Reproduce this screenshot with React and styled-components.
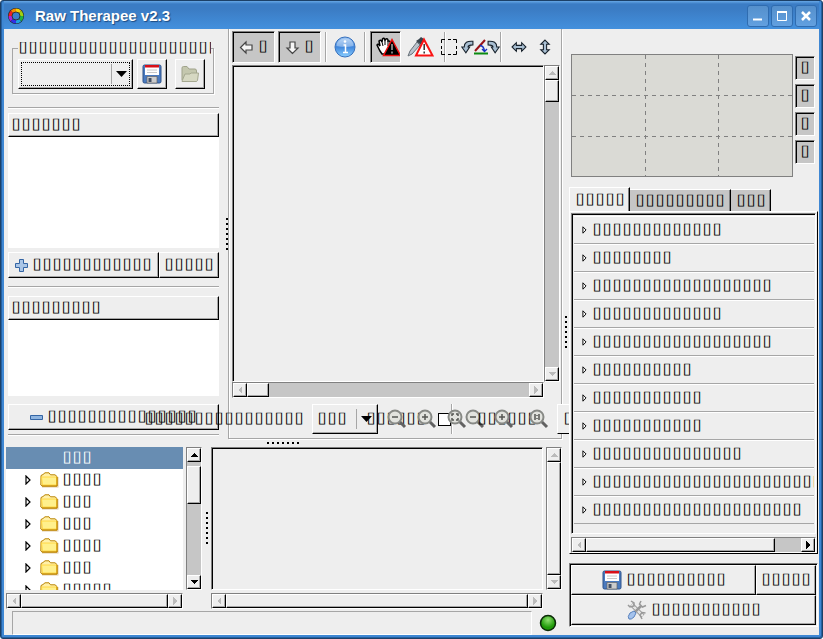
import React, { useState } from "react";
import styled, { createGlobalStyle, css } from "styled-components";

const GlobalStyle = createGlobalStyle`
  * {
    box-sizing: border-box;
  }
  body {
    margin: 0;
    background: #fff;
  }
  body, button, select, input {
    font-family: "Liberation Sans", Arial, sans-serif;
    font-size: 17px;
    line-height: 20px;
    color: #000;
  }
  button {
    cursor: pointer;
  }
`;

/* the interface font has no glyphs for the labels, every letter is a box */
const box = (n) => "\u2337".repeat(n);

const raised = css`
  border: 1px solid;
  border-color: #fff #000 #000 #fff;
  box-shadow: inset -1px -1px #a6a6a6;
  background: #eee;
`;
const sunken = css`
  border: 1px solid;
  border-color: #808080 #fff #fff #808080;
  box-shadow: inset 1px 1px #000;
`;

const Window = styled.div`
  display: flex;
  flex-direction: column;
  min-height: 100vh;
  border: 1px solid #1c4067;
  border-radius: 3px;
  background: #3e87d3;
  padding: 0 3px 3px;
  box-shadow: inset -1px -1px #2560a0, inset 1px 0 #2560a0;
`;
const TitleBar = styled.header`
  display: flex;
  align-items: center;
  gap: 2px;
  height: 28px;
  padding: 2px 2px 0 3px;
  background: linear-gradient(#66a7e6 0, #3b7cc4 3px, #3b7cc4 8px, #4390dd 28px);
`;
const Title = styled.h1`
  flex: 1;
  margin: 0 0 0 8px;
  font-size: 15px;
  font-weight: bold;
  color: #fff;
  text-shadow: 1px 1px 1px #1c4a80;
`;
const TitleButton = styled.button`
  display: flex;
  align-items: center;
  justify-content: center;
  width: 22px;
  height: 22px;
  padding: 0;
  border: 1px solid #2f6cb0;
  border-radius: 3px;
  background: linear-gradient(#5590cc, #62a0e0);
`;
const Body = styled.main`
  flex: 1;
  display: grid;
  grid-template-columns: minmax(0, 1fr) 7px 250px;
  background: #eee;
`;
const Work = styled.div`
  display: flex;
  flex-direction: column;
  min-width: 0;
`;
const Upper = styled.div`
  flex: 1;
  display: grid;
  grid-template-columns: 211px 9px minmax(0, 1fr);
  padding-left: 4px;
`;
const Side = styled.aside`
  display: flex;
  flex-direction: column;
  padding-top: 13px;
`;
const Profile = styled.fieldset`
  display: flex;
  align-items: flex-start;
  min-width: 0;
  height: 52px;
  margin: 0 5px 13px 4px;
  padding: 5px 4px 0 5px;
  border: 1px solid #a6a6a6;
  box-shadow: 1px 1px #fff;
`;
const Legend = styled.legend`
  width: 193px;
  height: 12px;
  padding: 0;
  line-height: 12px;
  overflow: hidden;
  white-space: nowrap;
`;
const SelectWrap = styled.div`
  ${raised}
  display: grid;
  grid-template-columns: minmax(0, 1fr) 22px;
  align-items: center;
  flex: none;
  width: ${(p) => p.$width}px;
  height: 30px;
  margin-right: ${(p) => p.$after || 0}px;
  margin-left: ${(p) => p.$before || 0}px;
  ${(p) => p.$focus && "outline: 1px dotted #000; outline-offset: -4px;"}
  svg {
    grid-area: 1 / 2;
    justify-self: center;
    pointer-events: none;
  }
`;
const Select = styled.select`
  grid-area: 1 / 1 / 2 / 3;
  appearance: none;
  width: 100%;
  height: 26px;
  padding: 0 4px;
  border: 0;
  outline: 0;
  background: linear-gradient(#a6a6a6, #a6a6a6) right 20px center / 1px 20px no-repeat;
`;
const Button = styled.button`
  ${raised}
  display: flex;
  align-items: center;
  justify-content: center;
  gap: 4px;
  flex: ${(p) => (p.$grow ? 1 : "none")};
  width: ${(p) => (p.$width ? `${p.$width}px` : "auto")};
  height: ${(p) => p.$height || 26}px;
  margin-right: ${(p) => p.$after || 0}px;
  padding: 0;
  white-space: nowrap;
`;
const Rule = styled.hr`
  width: 100%;
  height: 2px;
  margin: ${(p) => p.$before || 0}px 0 ${(p) => p.$after}px;
  border: 0;
  background: #a6a6a6;
  border-bottom: 1px solid #fff;
`;
const Header = styled.button`
  ${raised}
  height: 24px;
  padding: 0 2px;
  text-align: left;
`;
const Blank = styled.div`
  flex: ${(p) => p.$share} 0 0;
  background: #fff;
  margin-bottom: ${(p) => p.$after}px;
`;
const Row = styled.div`
  display: flex;
`;
const Grip = styled.div`
  align-self: center;
  justify-self: ${(p) => (p.$end ? "end" : "center")};
  width: ${(p) => (p.$flat ? 32 : 2)}px;
  height: ${(p) => (p.$flat ? 2 : 32)}px;
  margin: ${(p) => (p.$flat ? "3px 0" : 0)};
  background: ${(p) =>
    p.$flat
      ? "repeating-linear-gradient(90deg, #000 0 2px, transparent 2px 5px)"
      : "repeating-linear-gradient(#000 0 2px, transparent 2px 5px)"};
`;
const Editor = styled.section`
  display: flex;
  flex-direction: column;
  min-width: 0;
  border: 1px solid #a6a6a6;
  border-top: 0;
  box-shadow: inset 1px 0 #fff, 1px 1px #fff;
  padding: 2px 1px 4px 3px;
`;
const Toolbar = styled.div`
  display: flex;
  align-items: center;
  height: 32px;
  margin-bottom: 2px;
`;
const Toggle = styled.button`
  ${sunken}
  display: flex;
  align-items: center;
  justify-content: ${(p) => (p.$end ? "flex-end" : "center")};
  gap: 4px;
  flex: none;
  width: ${(p) => p.$width}px;
  height: ${(p) => p.$height || 32}px;
  margin-right: ${(p) => p.$after || 0}px;
  padding: 0;
  background: #c6c6c6;
`;
const Tool = styled.button`
  display: flex;
  align-items: center;
  justify-content: center;
  flex: none;
  width: ${(p) => p.$width}px;
  height: 30px;
  padding: 0;
  border: 0;
  background: none;
  svg {
    flex: none;
  }
`;
const Divider = styled.span`
  flex: none;
  width: 2px;
  height: 30px;
  margin-left: ${(p) => p.$before || 0}px;
  margin-right: ${(p) => p.$after || 0}px;
  background: #a6a6a6;
  border-right: 1px solid #fff;
`;
const Scrolled = styled.div`
  flex: ${(p) => (p.$fill ? 1 : "none")};
  display: grid;
  grid-template-columns: minmax(0, 1fr) 16px;
  grid-template-rows: minmax(0, 1fr) 16px;
  gap: ${(p) => p.$gap || 0}px;
  height: ${(p) => (p.$height ? `${p.$height}px` : "auto")};
`;
const Canvas = styled.div`
  ${sunken}
  background: #eee;
`;
const Bar = styled.div`
  display: flex;
  flex-direction: ${(p) => (p.$vertical ? "column" : "row")};
  border: 1px solid;
  border-color: #808080 #fff #fff #808080;
  background: #c6c6c6;
`;
const Arrow = styled.button`
  ${raised}
  display: flex;
  align-items: center;
  justify-content: center;
  flex: none;
  width: 14px;
  height: 14px;
  padding: 0;
  svg {
    transform: rotate(${(p) => p.$turn}deg);
  }
`;
const Thumb = styled.div`
  ${raised}
  flex: ${(p) => (p.$size ? `0 0 ${p.$size}px` : 1)};
  margin: ${(p) => (p.$offset ? `${p.$offset}px 0 0` : 0)};
`;
const Rest = styled.div`
  flex: 1;
`;
const ZoomBar = styled.div`
  display: flex;
  align-items: center;
  height: 30px;
  margin: 6px -9px 0 0;
  padding-left: 72px;
`;
/* takes no room of its own, the text runs out over the neighbours */
const Spill = styled.label`
  display: flex;
  flex: none;
  justify-content: ${(p) => (p.$left ? "flex-end" : "flex-start")};
  width: 0;
  margin-left: ${(p) => -p.$back || 0}px;
  margin-right: ${(p) => p.$after || 0}px;
  white-space: nowrap;
`;
const Check = styled.input`
  appearance: none;
  flex: none;
  width: 13px;
  height: 13px;
  margin: 0 0 0 -4px;
  border: 1px solid #000;
  background: #fff;
`;
const CutButton = styled.button`
  flex: none;
  width: 12px;
  height: 30px;
  margin-left: 2px;
  padding: 0 0 0 5px;
  overflow: hidden;
  text-align: left;
  border: 1px solid;
  border-color: #fff transparent #000 #fff;
  border-right: 0;
  background: #eee;
`;
const Lower = styled.div`
  display: grid;
  grid-template-columns: 196px 9px minmax(0, 1fr);
  padding-left: 2px;
`;
const Tree = styled.ul`
  margin: 0;
  padding: 0;
  overflow: hidden;
  list-style: none;
  background: #fff;
`;
const TreeItem = styled.li`
  display: grid;
  grid-template-columns: 34px 22px 1fr;
  align-items: center;
  height: 22px;
  white-space: nowrap;
  ${(p) => p.$selected && "background: #688db2; color: #fff;"}
  svg:first-child {
    margin-left: 19px;
  }
  span {
    grid-column: 3;
  }
`;
const Status = styled.footer`
  display: flex;
  align-items: center;
  gap: 7px;
  height: 26px;
  padding: 2px 5px 0 8px;
`;
const StatusText = styled.output`
  flex: 1;
  height: 24px;
  border: 1px solid;
  border-color: #a6a6a6 #fff #fff #a6a6a6;
`;
const Right = styled.aside`
  display: flex;
  flex-direction: column;
  min-width: 0;
  padding: 25px 1px 8px 0;
`;
const Scope = styled.div`
  display: flex;
  gap: 2px;
  margin: 0 3px 11px 2px;
`;
const Histogram = styled.svg`
  flex: 1;
  min-width: 0;
  height: 123px;
  border: 1px solid #808080;
  background: #dadad5;
`;
const Channels = styled.div`
  display: flex;
  flex-direction: column;
  gap: 4px;
  padding-top: 2px;
`;
const Tabs = styled.div`
  display: flex;
  align-items: flex-end;
  height: 23px;
`;
const Tab = styled.button`
  flex: none;
  width: ${(p) => p.$width}px;
  height: ${(p) => (p.$active ? 24 : 22)}px;
  padding: 0;
  border: 1px solid;
  border-color: #fff #000 transparent #fff;
  border-bottom: 0;
  border-left-width: ${(p) => (p.$active ? 1 : 0)}px;
  box-shadow: inset -1px 0 #808080;
  background: ${(p) => (p.$active ? "#eee" : "#c6c6c6")};
`;
const Notebook = styled.div`
  flex: 1;
  display: flex;
  flex-direction: column;
  gap: 3px;
  margin-bottom: 9px;
  padding: 1px 1px 0;
  border: 1px solid;
  border-color: #fff #000 #000 #fff;
`;
const ToolList = styled.ul`
  ${sunken}
  flex: 1;
  margin: 0;
  padding: 2px 1px 0 2px;
  overflow: hidden;
  list-style: none;
`;
const ToolHead = styled.button`
  display: flex;
  align-items: center;
  gap: 5px;
  width: 100%;
  height: 28px;
  padding: 0 0 0 8px;
  overflow: hidden;
  white-space: nowrap;
  border: 0;
  border-top: 1px solid #fff;
  border-bottom: 1px solid #a6a6a6;
  background: #eee;
  svg {
    flex: none;
  }
`;
const Actions = styled.div`
  ${sunken}
  padding: 1px;
`;

const Tri = ({ fill }) => (
  <svg width="8" height="8" viewBox="0 0 8 8" shapeRendering="crispEdges">
    <path d="M0 6H8L4 2Z" fill={fill} />
  </svg>
);
const DropArrow = () => (
  <svg width="11" height="6" viewBox="0 0 11 6">
    <path d="M0 0H11L5.500 6Z" />
  </svg>
);
const Expander = ({ big }) => (
  <svg width={big ? 6 : 5} height={big ? 10 : 8} viewBox="0 0 6 10">
    <path d="M1 1V9L5 5Z" fill="#fff" stroke="#000" strokeWidth="1.200" />
  </svg>
);
const Folder = () => (
  <svg width="19" height="16" viewBox="0 0 19 16">
    <path d="M3 5H18.500V15.500H2Z" fill="#e0c9a8" />
    <path d="M1 3.500L3 2.500L5 .800H9L10.500 2.800H15L17 4.500V14H2L.800 13Z" fill="#fff0a8" stroke="#b98300" />
    <path d="M1.500 5H16.500V13H2.500Z" fill="#fff08c" stroke="#ffd030" strokeWidth=".8" />
    <path d="M2 14H17V5" fill="none" stroke="#c48a00" />
  </svg>
);
const Floppy = () => (
  <svg width="20" height="20" viewBox="0 0 20 20">
    <rect x="1" y="1" width="18" height="18" rx="1.500" fill="#4a7abf" stroke="#2f5288" />
    <path d="M3 1H17V11H3Z" fill="#fff" />
    <path d="M3 1H17V3.500H3Z" fill="#d80f18" />
    <path d="M5 6H15M5 8.500H15" stroke="#c8c8c8" />
    <path d="M5 12.500H15V19H5Z" fill="#ccc" stroke="#666" strokeWidth=".7" />
    <path d="M6.500 14H9.500V18H6.500Z" fill="#445064" />
  </svg>
);
const OpenFolder = () => (
  <svg width="20" height="18" viewBox="0 0 20 18">
    <path d="M2 15V3Q2 1.500 3.500 1.500H7L9 4H15Q16.500 4 16.500 6V9" fill="#c4c7ae" stroke="#a0a38b" />
    <path d="M2 16L5 9H10L11 8H18.500L17.500 15.500Q17 16.500 16 16.500H2Z" fill="#d6d8c2" stroke="#a5a890" />
  </svg>
);
const Plus = () => (
  <svg width="13" height="13" viewBox="0 0 13 13">
    <path d="M4.500 .500H8.500V4.500H12.500V8.500H8.500V12.500H4.500V8.500H.500V4.500H4.500Z" fill="#a9c5e6" stroke="#3465a4" />
  </svg>
);
const Minus = () => (
  <svg width="13" height="5" viewBox="0 0 13 5">
    <path d="M.500 .500H12.500V4.500H.500Z" fill="#8fb5e0" stroke="#3465a4" />
  </svg>
);
const BlockArrow = ({ down }) => (
  <svg width="15" height="15" viewBox="0 0 15 15">
    <path
      d="M1.500 7.500L7 2V5H13V10H7V13Z"
      fill="#f6f6f6"
      stroke="#444"
      strokeWidth="1.200"
      transform={down ? "rotate(-90 7.500 7.500)" : undefined}
    />
  </svg>
);
const Info = () => (
  <svg width="22" height="22" viewBox="0 0 22 22">
    <defs>
      <linearGradient id="info" x2="0" y2="1">
        <stop stopColor="#9cc4f2" />
        <stop offset=".5" stopColor="#3f86dc" />
        <stop offset="1" stopColor="#8cd0ff" />
      </linearGradient>
    </defs>
    <circle cx="11" cy="11" r="10" fill="url(#info)" stroke="#3670bd" />
    <path d="M2.500 10Q3 3 11 2.500T19.500 10Q11 12 2.500 10Z" fill="#fff" opacity=".35" />
    <circle cx="11" cy="5.500" r="1.300" fill="#fff" />
    <path d="M9.500 9H11.500V16M9 16.500H14" fill="none" stroke="#fff" strokeWidth="1.500" />
  </svg>
);
const Hand = () => (
  <svg width="24" height="20" viewBox="0 0 24 20">
    <path
      d="M1 8Q2 6 4 9L3 4Q5 2 6 5L6.500 2Q8 0 9 3L10 2Q12 1 12 4L13 4Q15 4 14 8V13L12 17H6L4 14Z"
      fill="#fff"
      stroke="#000"
      strokeWidth="1.500"
    />
    <path d="M6 5L7 9M9 3V8M12 4V9" stroke="#000" />
    <path d="M16 2.500L24.500 18.500H7.500Z" stroke="#f01010" strokeWidth="1.500" />
    <path d="M16 7V13M16 14.500V16.500" stroke="#aaa" strokeWidth="1.500" />
  </svg>
);
const Picker = () => (
  <svg width="27" height="20" viewBox="0 0 27 20">
    <path d="M1 19L3 14L10 5L13 8L5 17Z" fill="#b9c3cc" stroke="#677078" />
    <path d="M9 4L12 2L14 0L17 2L14 8Z" fill="#39444d" />
    <path d="M17 2.500L25.500 18.500H9Z" fill="#fff" stroke="#fa1414" strokeWidth="2" />
    <path d="M17.200 7V13M17.200 14.500V16.500" stroke="#333" strokeWidth="1.500" />
  </svg>
);
const Crop = () => (
  <svg width="18" height="18" viewBox="0 0 18 18">
    <path d="M1.500 5V1.500H5M8 1.500H11M13 1.500H16.500V5M16.500 8V11M16.500 13V16.500H13M11 16.500H8M5 16.500H1.500V13M1.500 11V8" fill="none" stroke="#000" />
  </svg>
);
const Turn = ({ flip }) => (
  <svg width="13" height="14" viewBox="0 0 12 12">
    <path
      d="M11 .700Q3 0 3 6H.700L4.500 11.300L8 6H6.500Q6.500 4 11 4Z"
      fill="#a9bfd2"
      stroke="#17212b"
      transform={flip ? "matrix(-1 0 0 1 12 0)" : undefined}
    />
  </svg>
);
const Straighten = () => (
  <svg width="15" height="16" viewBox="0 0 15 16">
    <path d="M1 12L11 1" stroke="#981218" strokeWidth="2" />
    <path d="M0 14.500H14" stroke="#0b8a10" strokeWidth="2" />
    <path d="M6 6.500Q10 7 10.500 12M8 10L10.500 12.500L13 10" fill="none" stroke="#1530c0" strokeWidth="1.300" />
  </svg>
);
const Flip = ({ vertical }) => (
  <svg width="16" height="16" viewBox="0 0 15 15">
    <path
      d="M1 7.500L5 3.500V6H10V3.500L14 7.500L10 11.500V9H5V11.500Z"
      fill="#a9bfd2"
      stroke="#17212b"
      transform={vertical ? "rotate(90 7.500 7.500)" : undefined}
    />
  </svg>
);
const signs = {
  out: "M5 8H11",
  in: "M5 8H11M8 5V11",
  full: "M6 5V11M10 5V11M8 6V7M8 9V10",
  fit: "M5 7V5H7M9 5H11V7M11 9V11H9M7 11H5V9",
};
const Lens = ({ sign }) => (
  <svg width="20" height="20" viewBox="0 0 20 20">
    <path d="M12.500 12.500L18 18" stroke="#626262" strokeWidth="3" />
    <circle cx="8" cy="8" r="6.500" fill="#e2e3de" stroke="#878985" strokeWidth="2" />
    <path d={signs[sign]} fill="none" stroke="#555753" strokeWidth="1.500" />
  </svg>
);
const Tools = () => (
  <svg width="20" height="20" viewBox="0 0 20 20">
    <path d="M4.500 4.500L16 16" stroke="#888" strokeWidth="4" />
    <path d="M4.500 4.500L16 16" stroke="#e4e4e4" strokeWidth="2.500" />
    <path d="M1 5L3 7L7 6V3L4 1" fill="none" stroke="#999" strokeWidth="1.500" />
    <path d="M18.500 13L15 12.500L13 15L15 19" fill="none" stroke="#999" strokeWidth="1.500" />
    <path d="M8 12L14 6" stroke="#999" strokeWidth="2.500" />
    <path d="M14 1L12.500 4L15.500 7L19 5.500" fill="#eee" stroke="#999" strokeWidth="1.500" />
    <path d="M2 19Q0 17 3 13L7 11L9 13L7 17Q4 20 2 19Z" fill="#a4c2ec" stroke="#5a82bd" />
  </svg>
);
const Logo = () => (
  <svg width="18" height="18" viewBox="0 0 18 18">
    <circle cx="9" cy="9" r="8" fill="#222" />
    {["#f8d000", "#f58a00", "#f02020", "#b020d0", "#3030e8", "#20a0e0", "#20b040", "#a0d010"].map((c, i) => (
      <path key={c} d="M9 9L9 1.500A7.500 7.500 0 0 1 14.300 3.700Z" fill={c} transform={`rotate(${i * -45} 9 9)`} />
    ))}
    <circle cx="9" cy="9" r="4" fill="#3b7fc9" stroke="#333" />
  </svg>
);
const Led = () => (
  <svg width="18" height="18" viewBox="0 0 18 18">
    <defs>
      <radialGradient id="led" cy=".3">
        <stop stopColor="#8fe070" />
        <stop offset="1" stopColor="#1f9a08" />
      </radialGradient>
    </defs>
    <circle cx="9" cy="9" r="7.500" fill="url(#led)" stroke="#0b2a08" strokeWidth="1.500" />
  </svg>
);

/* lead and tail say which of the two arrows is enabled */
function ScrollBar({ vertical, size, offset, lead, tail }) {
  return (
    <Bar $vertical={vertical}>
      <Arrow aria-label="Scroll back" $turn={vertical ? 0 : -90}>
        <Tri fill={lead ? "#000" : "#bbb"} />
      </Arrow>
      <Thumb $size={size} $offset={offset} />
      {size && <Rest />}
      <Arrow aria-label="Scroll forward" $turn={vertical ? 180 : 90}>
        <Tri fill={tail ? "#000" : "#bbb"} />
      </Arrow>
    </Bar>
  );
}

const treeItems = [4, 3, 3, 4, 3, 5];
const tools = [13, 8, 18, 13, 18, 10, 11, 11, 15, 23, 21];
const tabs = [
  { label: 5, width: 61 },
  { label: 9, width: 101 },
  { label: 3, width: 40 },
];

export default function App() {
  const [tab, setTab] = useState(0);

  return (
    <Window>
      <GlobalStyle />
      <TitleBar>
        <Logo />
        <Title>Raw Therapee v2.3</Title>
        <TitleButton aria-label="Minimize">
          <svg width="12" height="12"><path d="M1 9.500H10" stroke="#fff" strokeWidth="2" /></svg>
        </TitleButton>
        <TitleButton aria-label="Maximize">
          <svg width="12" height="12"><path d="M1.500 1.500H10.500V10.500H1.500Z" fill="none" stroke="#fff" /><path d="M1 2H11" stroke="#fff" strokeWidth="2" /></svg>
        </TitleButton>
        <TitleButton aria-label="Close">
          <svg width="12" height="12"><path d="M2 2L10 10M10 2L2 10" stroke="#fff" strokeWidth="2.500" /></svg>
        </TitleButton>
      </TitleBar>
      <Body>
        <Work>
          <Upper>
            <Side>
              <Profile>
                <Legend>{box(20)}</Legend>
                <SelectWrap $width={115} $after={4} $focus>
                  <Select aria-label="Profile">
                    <option />
                  </Select>
                  <DropArrow />
                </SelectWrap>
                <Button $width={30} $height={30} $after={8} aria-label="Save"><Floppy /></Button>
                <Button $width={30} $height={30} aria-label="Open"><OpenFolder /></Button>
              </Profile>
              <Rule $after={4} />
              <Header>{box(7)}</Header>
              <Blank $share={111} $after={4} />
              <Row>
                <Button $grow><Plus />{box(12)}</Button>
                <Button $width={60}>{box(5)}</Button>
              </Row>
              <Rule $before={8} $after={8} />
              <Header>{box(9)}</Header>
              <Blank $share={76} $after={8} />
              <Button><Minus />{box(15)}</Button>
              <Rule $before={4} $after={3} />
            </Side>
            <Grip $end />
            <Editor>
              <Toolbar>
                <Toggle $width={43} $after={3}><BlockArrow />{box(1)}</Toggle>
                <Toggle $width={43} $after={4}><BlockArrow down />{box(1)}</Toggle>
                <Divider $after={5} />
                <Tool $width={26} aria-label="Info"><Info /></Tool>
                <Divider $before={6} $after={4} />
                <Toggle $width={31} $end aria-label="Hand"><Hand /></Toggle>
                <Tool $width={39} aria-label="White balance"><Picker /></Tool>
                <Divider $before={4} $after={-6} />
                <Tool $width={18} aria-label="Crop"><Crop /></Tool>
                <Tool $width={18} aria-label="Rotate left"><Turn /></Tool>
                <Tool $width={10} aria-label="Straighten"><Straighten /></Tool>
                <Tool $width={14} aria-label="Rotate right"><Turn flip /></Tool>
                <Divider $after={4} />
                <Tool $width={26} aria-label="Flip horizontally"><Flip /></Tool>
                <Tool $width={26} aria-label="Flip vertically"><Flip vertical /></Tool>
              </Toolbar>
              <Scrolled $fill>
                <Canvas />
                <ScrollBar vertical size={22} />
                <ScrollBar size={22} />
              </Scrolled>
              <ZoomBar>
                <Spill $left htmlFor="background">{box(16)}</Spill>
                <SelectWrap $width={66} $before={8}>
                  <Select id="background">
                    <option>{box(3)}</option>
                  </Select>
                  <DropArrow />
                </SelectWrap>
                <Spill $back={12} $after={16} htmlFor="clip">{box(6)}</Spill>
                <Tool $width={30} aria-label="Zoom out"><Lens sign="out" /></Tool>
                <Tool $width={30} aria-label="Zoom in"><Lens sign="in" /></Tool>
                <Check type="checkbox" id="clip" />
                <Divider $after={-5} />
                <Tool $width={17} aria-label="Fit to window"><Lens sign="fit" /></Tool>
                <Tool $width={20} aria-label="Preview smaller"><Lens sign="out" /></Tool>
                <Spill $back={8} $after={8} htmlFor="larger">{box(6)}</Spill>
                <Tool $width={38} id="larger"><Lens sign="in" /></Tool>
                <Tool $width={32} aria-label="Actual size"><Lens sign="full" /></Tool>
                <CutButton>{box(1)}</CutButton>
              </ZoomBar>
            </Editor>
          </Upper>
          <Grip $flat />
          <Lower>
            <Scrolled $gap={3} $height={162}>
              <Tree>
                <TreeItem $selected><span>{box(3)}</span></TreeItem>
                {treeItems.map((n, i) => (
                  <TreeItem key={i}>
                    <Expander big />
                    <Folder />
                    <span>{box(n)}</span>
                  </TreeItem>
                ))}
              </Tree>
              <ScrollBar vertical size={38} offset={4} lead tail />
              <ScrollBar />
            </Scrolled>
            <Grip />
            <Scrolled $gap={3} $height={162}>
              <Canvas />
              <ScrollBar vertical />
              <ScrollBar />
            </Scrolled>
          </Lower>
          <Status>
            <StatusText />
            <Led />
          </Status>
        </Work>
        <Grip />
        <Right>
          <Scope>
            <Histogram shapeRendering="crispEdges">
              <path d="M0 40.500H800M0 81.500H800" stroke="#808080" strokeDasharray="4 4" />
              <line x1="33.300%" x2="33.300%" y1="0" y2="123" stroke="#808080" strokeDasharray="4 4" />
              <line x1="66.700%" x2="66.700%" y1="0" y2="123" stroke="#808080" strokeDasharray="4 4" />
            </Histogram>
            <Channels>
              {[0, 1, 2, 3].map((i) => (
                <Toggle key={i} $width={20} $height={24}>{box(1)}</Toggle>
              ))}
            </Channels>
          </Scope>
          <Tabs role="tablist">
            {tabs.map((t, i) => (
              <Tab key={i} role="tab" aria-selected={tab === i} $active={tab === i} $width={t.width} onClick={() => setTab(i)}>
                {box(t.label)}
              </Tab>
            ))}
          </Tabs>
          <Notebook>
            <ToolList>
              {tools.map((n, i) => (
                <li key={i}>
                  <ToolHead><Expander />{box(n)}</ToolHead>
                </li>
              ))}
            </ToolList>
            <ScrollBar size={189} tail />
          </Notebook>
          <Actions>
            <Row>
              <Button $grow $height={30}><Floppy />{box(10)}</Button>
              <Button $width={60} $height={30}>{box(5)}</Button>
            </Row>
            <Row>
              <Button $grow $height={30}><Tools />{box(11)}</Button>
            </Row>
          </Actions>
        </Right>
      </Body>
    </Window>
  );
}
